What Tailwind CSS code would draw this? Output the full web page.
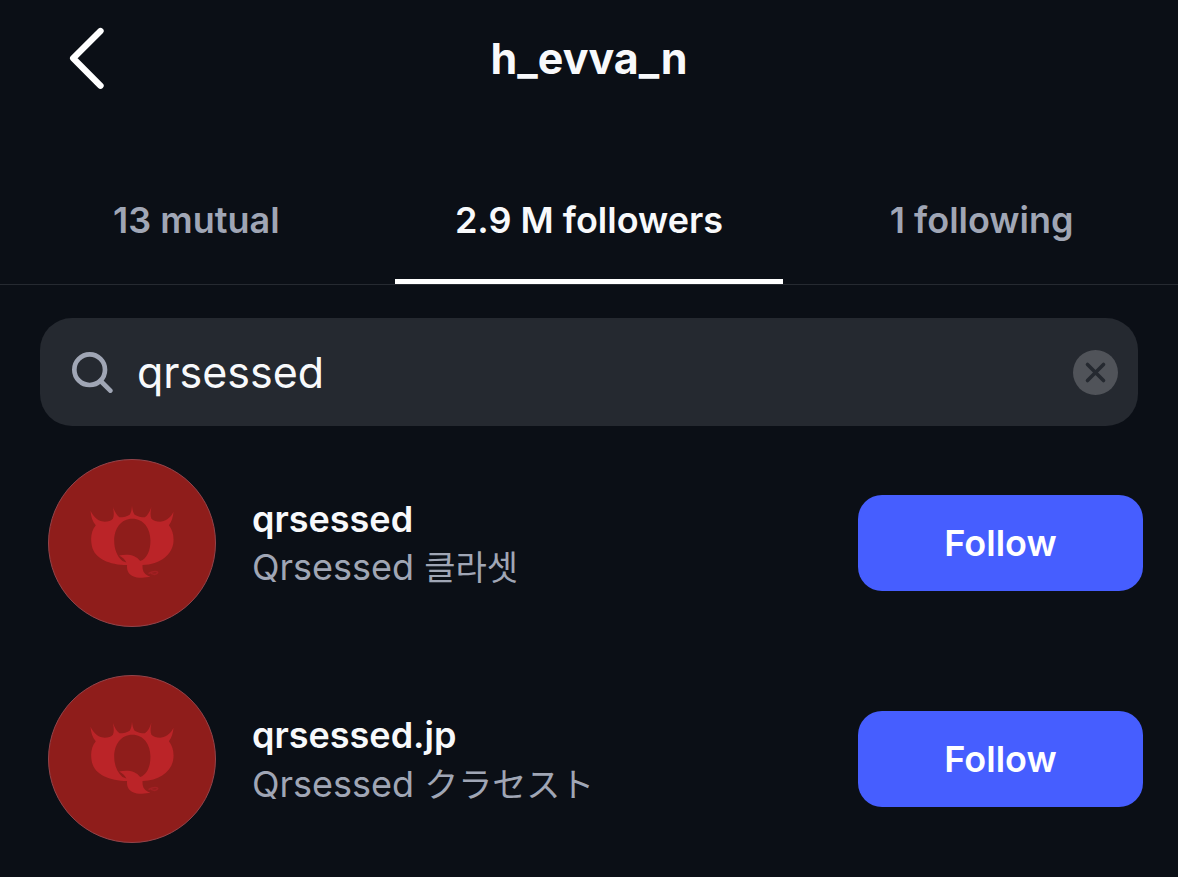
<!DOCTYPE html>
<html lang="en">
<head>
  <meta charset="UTF-8">
  <meta name="viewport" content="width=device-width, initial-scale=1.0">
  <title>h_evva_n followers</title>
  <script src="https://cdn.jsdelivr.net/npm/@tailwindcss/browser@4"></script>
</head>
<body class="min-h-screen bg-[#0b0f16] font-['Inter','Noto_Sans_CJK_KR',sans-serif] text-[#f8f9fb]">

  <!-- logo shared by both avatars -->
  <svg class="hidden" aria-hidden="true">
    <symbol id="logo" viewBox="-102 -108 504 504">
      <path fill="#bb2428" fill-rule="evenodd" d="M24 46 C31 60 43 76 62 79 C76 80 87 76 92 70 C96 62 95 48 92 34 C97 49 104 60 112 66 C124 66 136 63 143 58 C148 51 149 42 150 30 C151 42 153 51 158 58 C166 63 178 66 189 66 C198 60 204 49 209 34 C206 50 205 62 209 70 C215 76 227 80 240 79 C257 75 269 64 276 48 C275 65 270 80 262 90 C273 104 277 120 276 139 C274 179 235 210 182 211 C181 229 187 241 206 246 C190 251 165 251 151 244 C137 237 134 224 135 211 C82 210 36 192 28 152 C23 127 27 106 40 90 C30 79 25 63 24 46 Z M151 70 C117 70 96 99 96 137 C96 162 104 183 121 199 L133 203 C129 195 121 187 111 182 C135 176 163 180 175 199 C196 191 206 166 206 137 C206 99 185 70 151 70 Z"/>
      <path fill="none" stroke="#a32023" stroke-width="5" stroke-linecap="round" d="M202 236 C214 229 228 229 228 234 C226 239 217 241 210 237"/>
    </symbol>
  </svg>

  <header class="grid h-[115px] grid-cols-[1fr_auto_1fr] items-center px-17">
    <button type="button" aria-label="Back" class="justify-self-start">
      <svg class="h-16 w-[37px]" viewBox="84 45 110 192" fill="none" stroke="#fff" stroke-width="19" stroke-linecap="round" stroke-linejoin="round">
        <path d="M181 60 L99 142 L181 224"/>
      </svg>
    </button>
    <h1 class="text-[43px] leading-13 font-bold">h_evva_n</h1>
  </header>

  <nav class="mt-10 grid h-[130px] grid-cols-3 border-b border-[#262a31] text-4xl font-semibold text-[#a0a6b5]">
    <a href="#mutual" class="flex items-center justify-center">13 mutual</a>
    <a href="#followers" aria-current="page" class="mx-0.5 flex items-center justify-center border-t-5 border-b-5 border-t-transparent border-b-white text-[#f8f9fb]">2.9 M followers</a>
    <a href="#following" class="flex items-center justify-center">1 following</a>
  </nav>

  <main>
    <form class="mx-10 mt-[33px] flex h-27 items-center rounded-[32px] bg-[#252930] pr-5 pl-[31px]">
      <label for="search" aria-label="Search">
        <svg class="size-[42px]" viewBox="122 122 126 126" fill="none" stroke="#a0a6b5" stroke-width="14" stroke-linecap="round">
          <circle cx="178" cy="178" r="46"/>
          <path d="M211 212 L240 241"/>
        </svg>
      </label>
      <input id="search" type="text" value="qrsessed" class="ml-6 min-w-0 flex-1 text-[43px] leading-14 outline-none">
      <button type="button" aria-label="Clear search">
        <svg class="size-[45px]" viewBox="0 0 45 45">
          <circle cx="22.5" cy="22.5" r="22.5" fill="#505359"/>
          <path d="M14.5 14.5 L30.5 30.5 M30.5 14.5 L14.5 30.5" fill="none" stroke="#252930" stroke-width="3.6" stroke-linecap="round"/>
        </svg>
      </button>
    </form>

    <ul class="mt-[33px] flex flex-col gap-12 pr-[35px] pb-8 pl-12">
      <li class="flex items-center">
        <svg class="size-42 shrink-0 rounded-full border border-[#93444a] bg-[#8f1d1b]" role="img" aria-label="qrsessed"><use href="#logo"/></svg>
        <div class="ml-9 min-w-0 flex-1">
          <p class="text-4xl leading-12 font-semibold">qrsessed</p>
          <p class="text-4xl leading-12 text-[#a0a6b5]">Qrsessed <span lang="ko" class="text-[34px]">클라셋</span></p>
        </div>
        <button type="button" class="h-24 w-[285px] rounded-3xl bg-[#465eff] text-4xl font-semibold text-white">Follow</button>
      </li>
      <li class="flex items-center">
        <svg class="size-42 shrink-0 rounded-full border border-[#93444a] bg-[#8f1d1b]" role="img" aria-label="qrsessed.jp"><use href="#logo"/></svg>
        <div class="ml-9 min-w-0 flex-1">
          <p class="text-4xl leading-12 font-semibold">qrsessed.jp</p>
          <p class="text-4xl leading-12 text-[#a0a6b5]">Qrsessed <span lang="ja" class="font-['Noto_Sans_CJK_JP',sans-serif] text-[34px] leading-12">クラセスト</span></p>
        </div>
        <button type="button" class="h-24 w-[285px] rounded-3xl bg-[#465eff] text-4xl font-semibold text-white">Follow</button>
      </li>
    </ul>
  </main>
</body>
</html>
